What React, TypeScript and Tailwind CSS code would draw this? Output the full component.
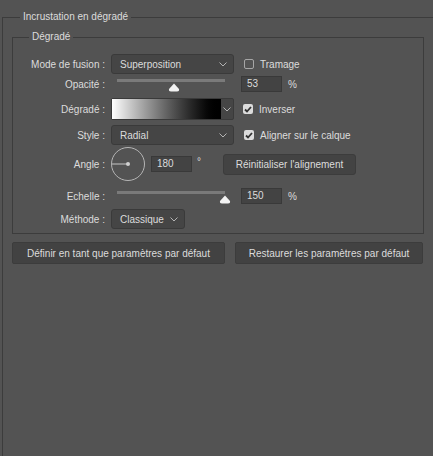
import React from 'react';

const Chevron = () => (
  <svg width="8" height="5" viewBox="0 0 8 5" className="shrink-0">
    <polyline points="0.5,0.5 4,4 7.5,0.5" fill="none" stroke="#b4b4b4" strokeWidth="1" />
  </svg>
);

const Thumb = () => (
  <svg width="12" height="9" viewBox="0 0 12 9">
    <path d="M6 0.5 L11 6 Q11.5 8.5 9 8.5 L3 8.5 Q0.5 8.5 1 6 Z" fill="#f2f2f2" />
  </svg>
);

function Select({ label, w }: { label: string; w: string }) {
  return (
    <div className={`${w} h-[20px] flex items-center justify-between pl-[8px] pr-[6px] bg-[#454545] border border-[#3a3a3a] rounded-[3px]`}>
      <span>{label}</span>
      <Chevron />
    </div>
  );
}

function Check({ checked, label }: { checked: boolean; label: string }) {
  return (
    <div className="flex items-center gap-[6px]">
      {checked ? (
        <div className="w-[10px] h-[10px] rounded-[2px] bg-[#dcdcdc] flex items-center justify-center">
          <svg width="8" height="7" viewBox="0 0 8 7">
            <polyline points="1,3.5 3,5.5 7,1" fill="none" stroke="#333" strokeWidth="1.8" />
          </svg>
        </div>
      ) : (
        <div className="w-[10px] h-[10px] rounded-[2px] border border-[#a6a6a6]" />
      )}
      <span>{label}</span>
    </div>
  );
}

function Slider({ pos }: { pos: number }) {
  return (
    <div className="relative w-[122px] h-[20px]">
      <div className="absolute left-[6px] top-[5px] w-[108px] h-[3px] bg-[#7a7a7a]" />
      <div className="absolute top-[9px]" style={{ left: pos }}>
        <Thumb />
      </div>
    </div>
  );
}

function Label({ children }: { children: React.ReactNode }) {
  return <div className="w-[92px] shrink-0 text-right">{children}</div>;
}

function NumBox({ value }: { value: string }) {
  return (
    <div className="w-[41px] h-[16px] bg-[#434343] border border-[#393939] pl-[5px] flex items-center leading-none">
      {value}
    </div>
  );
}

export default function App() {
  return (
    <div
      className="w-[433px] h-[456px] overflow-hidden bg-[#535353] text-[#dcdcdc] text-[10px] pt-[10px] whitespace-nowrap"
      style={{ fontFamily: '"Liberation Sans", Arial, sans-serif' }}
    >
      <fieldset className="ml-[2px] w-[470px] h-[480px] border-l border-t border-[#3c3c3c]">
        <legend className="ml-[17px] px-[3px] leading-[14px]">Incrustation en dégradé</legend>

        <fieldset className="ml-[9px] mt-[6px] w-[412px] border border-[#3c3c3c] pb-[4px]">
          <legend className="ml-[16px] px-[3px] leading-[14px]">Dégradé</legend>

          {/* Mode de fusion */}
          <div className="flex items-center h-[20px] mt-[10px]">
            <Label>Mode de fusion :</Label>
            <div className="ml-[6px]">
              <Select label="Superposition" w="w-[123px]" />
            </div>
            <div className="ml-[10px]">
              <Check checked={false} label="Tramage" />
            </div>
          </div>

          {/* Opacité */}
          <div className="flex items-center h-[20px]">
            <Label>Opacité :</Label>
            <div className="ml-[6px]">
              <Slider pos={57} />
            </div>
            <div className="ml-[8px]">
              <NumBox value="53" />
            </div>
            <span className="ml-[6px]">%</span>
          </div>

          {/* Dégradé */}
          <div className="flex items-center h-[22px] mt-[4px]">
            <Label>Dégradé :</Label>
            <div className="ml-[6px] w-[123px] h-[22px] flex border border-[#3a3a3a] rounded-[2px] bg-[#454545]">
              <div className="w-[109px] h-full bg-gradient-to-r from-white to-black" />
              <div className="flex-1 flex items-center justify-center">
                <Chevron />
              </div>
            </div>
            <div className="ml-[9px]">
              <Check checked label="Inverser" />
            </div>
          </div>

          {/* Style */}
          <div className="flex items-center h-[20px] mt-[5px]">
            <Label>Style :</Label>
            <div className="ml-[6px]">
              <Select label="Radial" w="w-[123px]" />
            </div>
            <div className="ml-[10px]">
              <Check checked label="Aligner sur le calque" />
            </div>
          </div>

          {/* Angle */}
          <div className="flex items-center h-[34px] mt-[2px]">
            <Label>Angle :</Label>
            <div className="ml-[6px] w-[34px] h-[34px] rounded-full border border-[#b5b5b5] relative">
              <svg width="34" height="34" viewBox="0 0 34 34" className="absolute -left-[1px] -top-[1px]">
                <line x1="1" y1="17" x2="17" y2="17" stroke="#c8c8c8" strokeWidth="1" />
                <circle cx="17" cy="17" r="2" fill="#d0d0d0" />
              </svg>
            </div>
            <div className="ml-[6px]">
              <NumBox value="180" />
            </div>
            <span className="w-[31px] pl-[5px] -mt-[5px]">°</span>
            <div className="w-[133px] h-[21px] bg-[#434343] border border-[#3c3c3c] rounded-[3px] flex items-center justify-center">
              Réinitialiser l'alignement
            </div>
          </div>

          {/* Echelle */}
          <div className="flex items-center h-[20px] mt-[5px]">
            <Label>Echelle :</Label>
            <div className="ml-[6px]">
              <Slider pos={108} />
            </div>
            <div className="ml-[8px]">
              <NumBox value="150" />
            </div>
            <span className="ml-[6px]">%</span>
          </div>

          {/* Méthode */}
          <div className="flex items-center h-[20px] mt-[3px]">
            <Label>Méthode :</Label>
            <div className="ml-[6px]">
              <Select label="Classique" w="w-[74px]" />
            </div>
          </div>
        </fieldset>

        <div className="flex ml-[9px] mt-[8px] gap-[10px]">
          <div className="w-[213px] h-[22px] bg-[#424242] border border-[#3c3c3c] rounded-[2px] flex items-center justify-center">
            Définir en tant que paramètres par défaut
          </div>
          <div className="w-[188px] h-[22px] bg-[#424242] border border-[#3c3c3c] rounded-[2px] flex items-center justify-center">
            Restaurer les paramètres par défaut
          </div>
        </div>
      </fieldset>
    </div>
  );
}
